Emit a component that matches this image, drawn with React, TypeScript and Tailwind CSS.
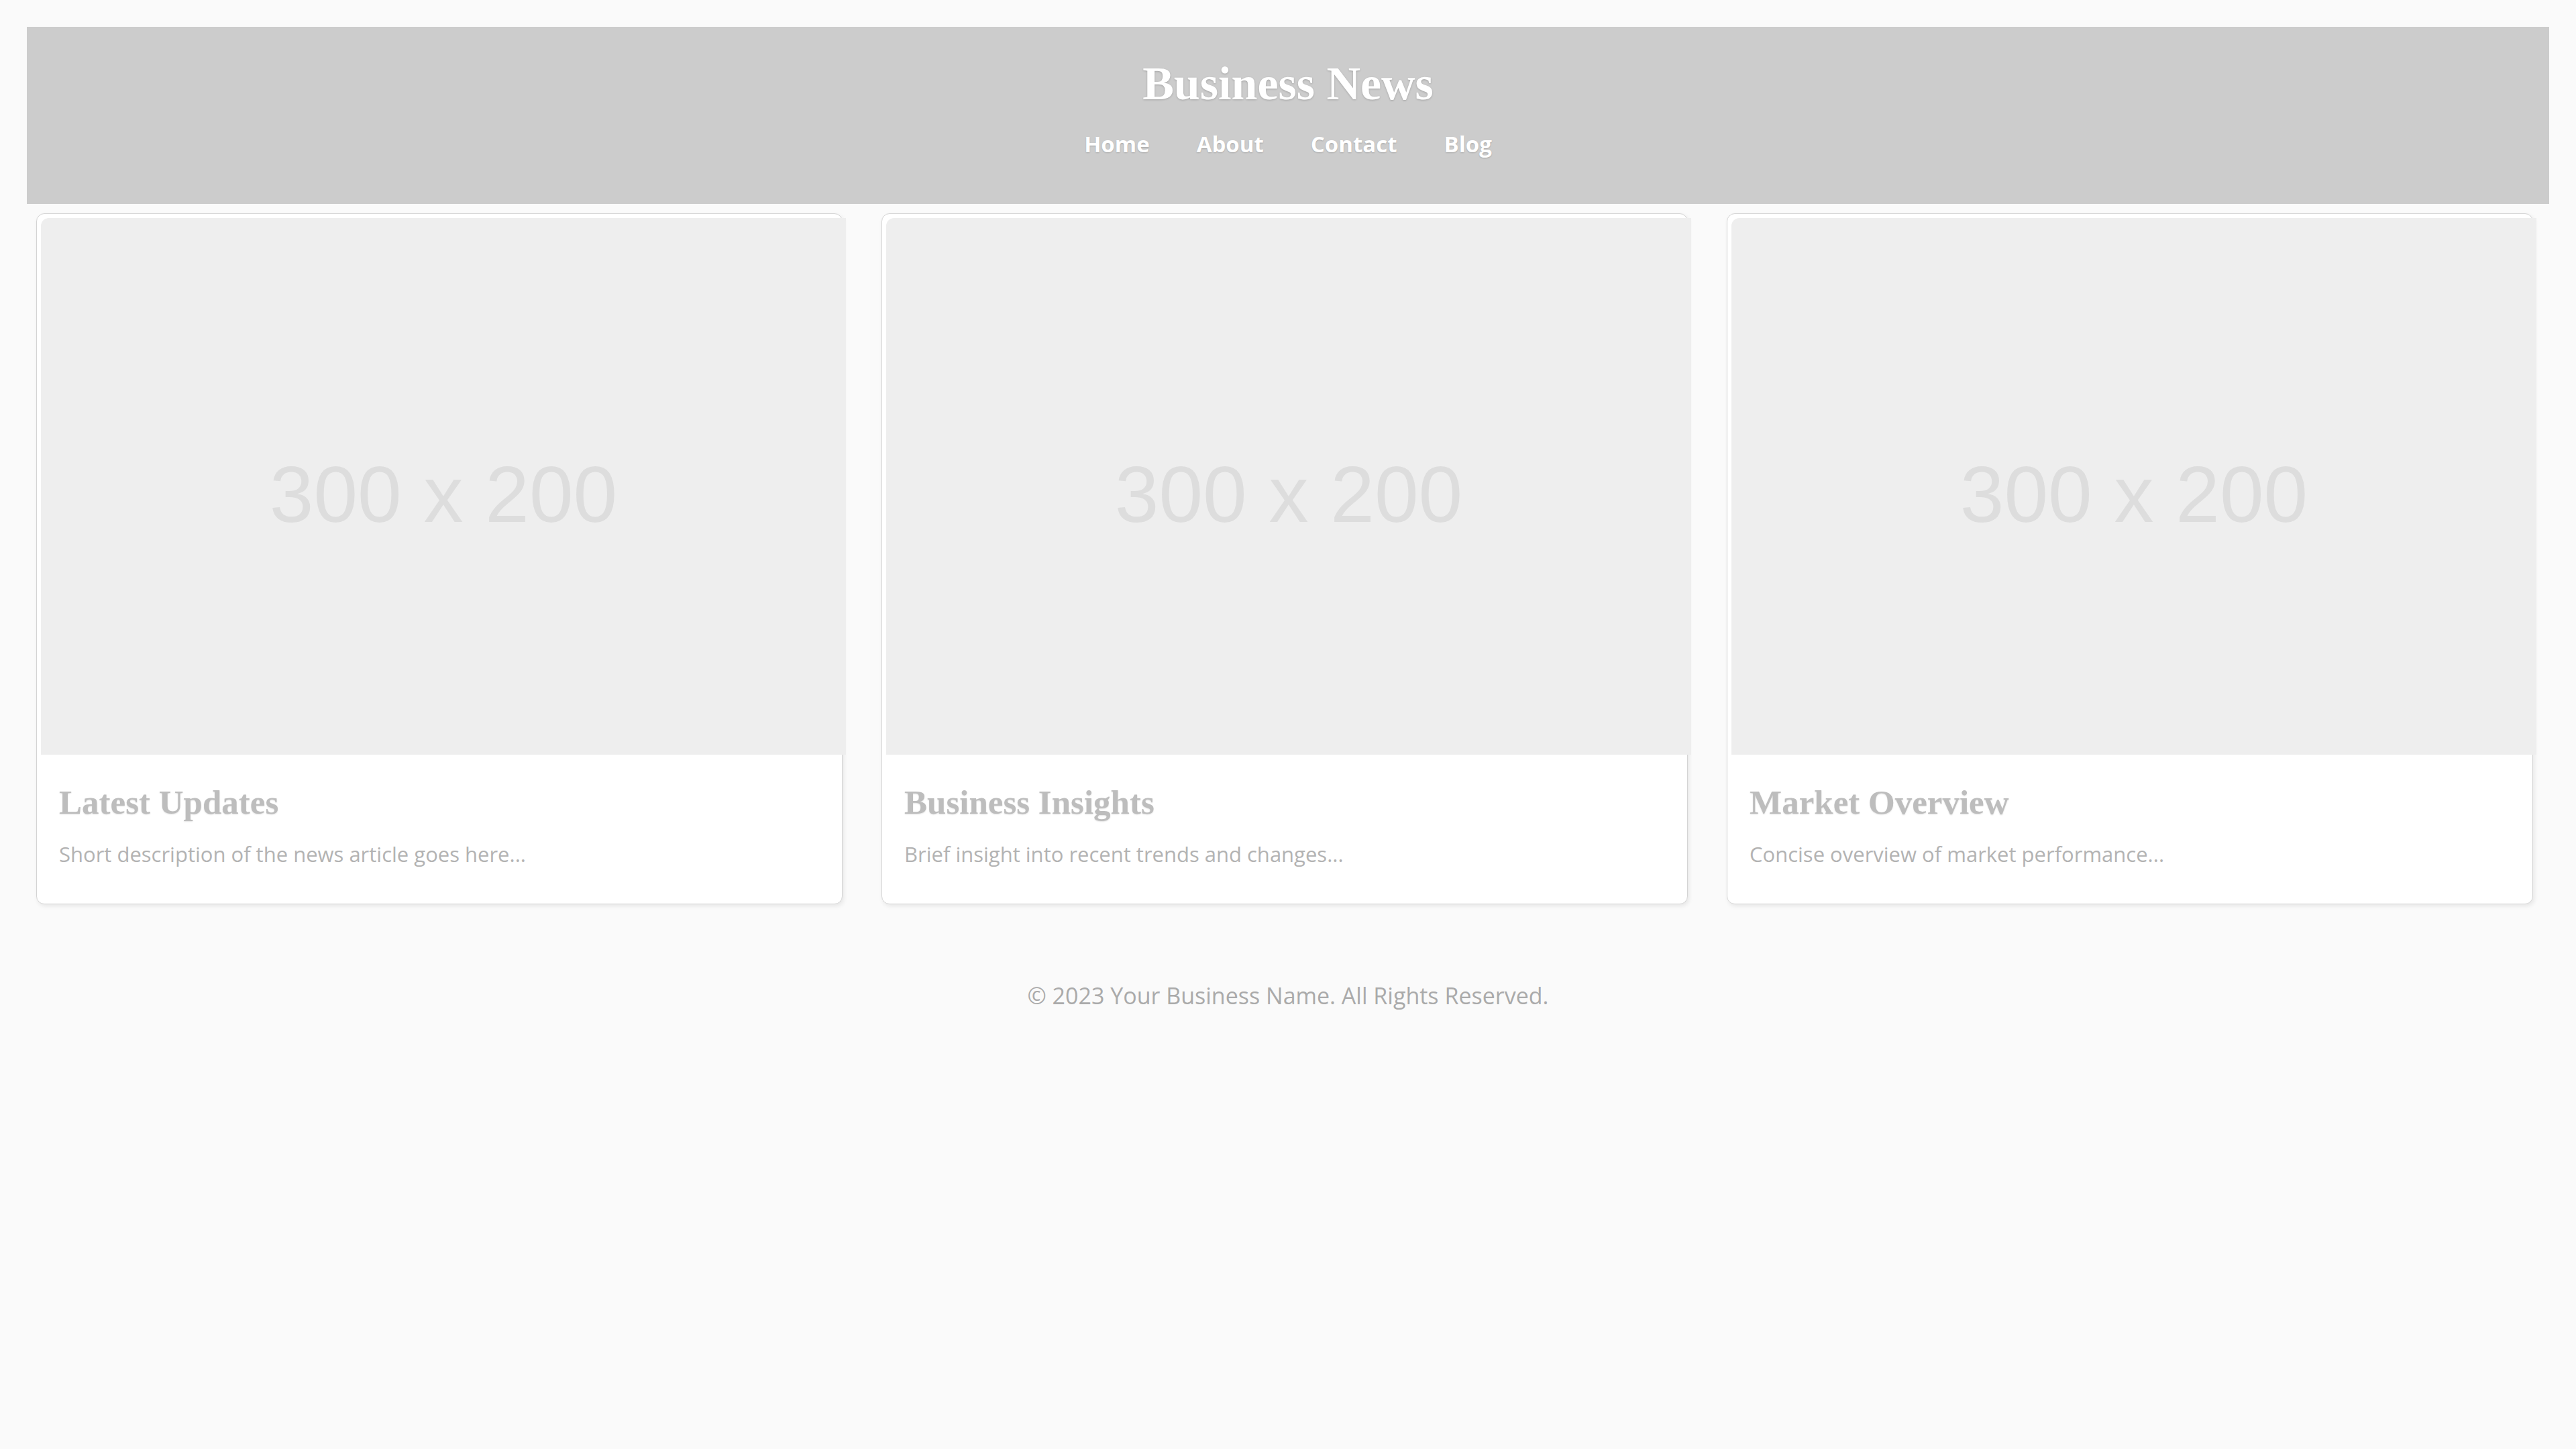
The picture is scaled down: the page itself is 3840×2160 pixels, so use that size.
const cards = [
  {
    title: 'Latest Updates',
    text: 'Short description of the news article goes here...',
  },
  {
    title: 'Business Insights',
    text: 'Brief insight into recent trends and changes...',
  },
  {
    title: 'Market Overview',
    text: 'Concise overview of market performance...',
  },
];

const links = ['Home', 'About', 'Contact', 'Blog'];

function Placeholder() {
  return (
    <div className="ml-[6px] mr-[-6px] mt-[6px] flex aspect-[3/2] items-center justify-center rounded-tl-[12px] bg-[#eeeeee]">
      <span className="mt-[24px] font-['Liberation_Sans',Arial,sans-serif] text-[118px] leading-none text-[#dddddd]">
        300 x 200
      </span>
    </div>
  );
}

function Card({ title, text }: { title: string; text: string }) {
  return (
    <article className="rounded-[12px] border border-[#d4d4d4] bg-white shadow-[2px_3px_6px_rgba(0,0,0,0.08)]">
      <Placeholder />
      <div className="px-[33px] pb-[51px] pt-[41px]">
        <h2 className="font-['Liberation_Serif',Georgia,serif] text-[51px] font-bold leading-[1.2] text-[#bdbdbd] [text-shadow:0_1px_2px_rgba(0,0,0,0.12)]">
          {title}
        </h2>
        <p className="mt-[25px] font-['Open_Sans',sans-serif] text-[31px] leading-[1.4] text-[#b3b3b3]">
          {text}
        </p>
      </div>
    </article>
  );
}

export default function App() {
  return (
    <div className="min-h-screen bg-[#fafafa] px-[40px] pt-[40px]">
      <header className="flex h-[264px] flex-col items-center bg-[#cccccc] pt-[43px]">
        <h1 className="font-['Liberation_Serif',Georgia,serif] text-[70px] font-bold leading-[1.2] text-white [text-shadow:0_1px_3px_rgba(0,0,0,0.2)]">
          Business News
        </h1>
        <nav className="mt-[24px] flex gap-[70px]">
          {links.map((l) => (
            <a
              key={l}
              href="#"
              className="font-['Open_Sans',sans-serif] text-[33px] font-bold leading-[1.45] text-white [text-shadow:0_1px_2px_rgba(0,0,0,0.2)]"
            >
              {l}
            </a>
          ))}
        </nav>
      </header>

      <main className="grid grid-cols-3 gap-[58px] pl-[14px] pr-[24px] pt-[14px]">
        {cards.map((c) => (
          <Card key={c.title} {...c} />
        ))}
      </main>

      <footer className="mt-[113px] text-center font-['Open_Sans',sans-serif] text-[34px] leading-[1.4] text-[#aaaaaa]">
        © 2023 Your Business Name. All Rights Reserved.
      </footer>
    </div>
  );
}
